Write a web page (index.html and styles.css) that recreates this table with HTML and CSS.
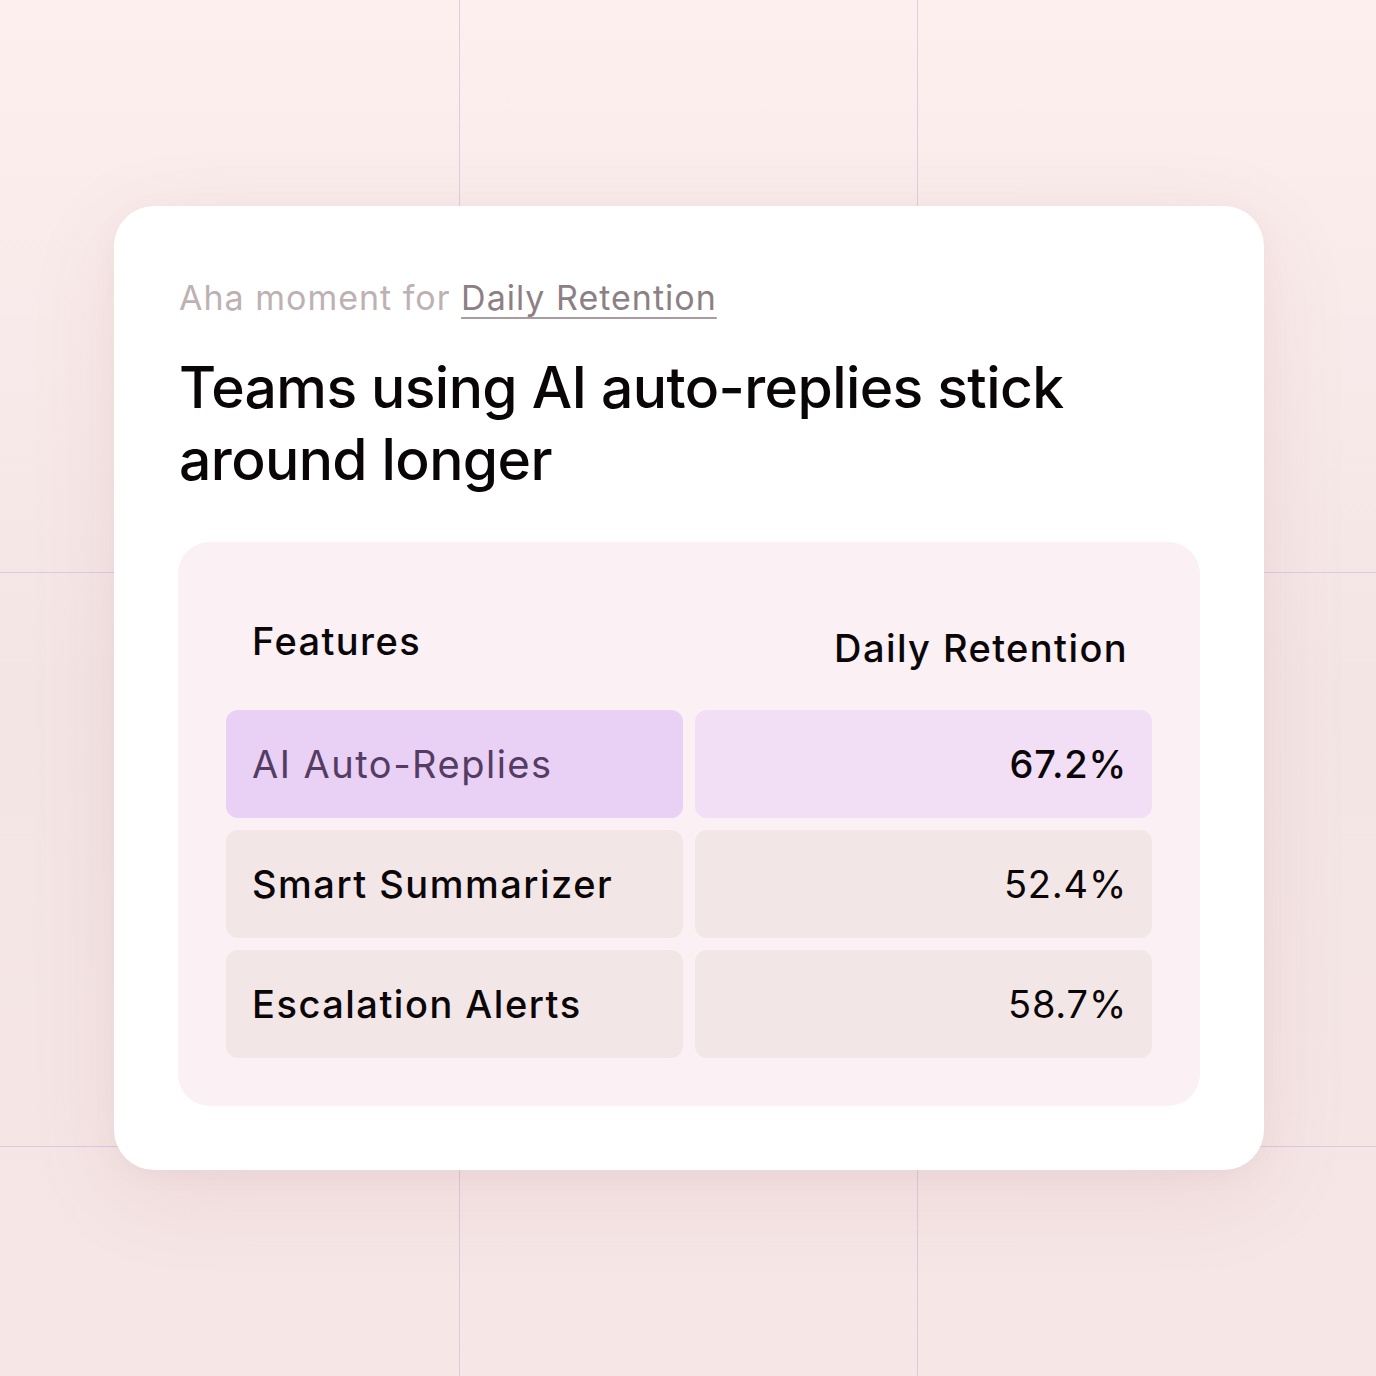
FILE: index.html
```html
<!DOCTYPE html>
<html lang="en">
<head>
<meta charset="utf-8">
<title>Aha moment</title>
<link rel="stylesheet" href="styles.css">
</head>
<body>
<main class="stage">
  <section class="card">
    <p class="eyebrow">Aha moment for <span class="eyebrow-link">Daily Retention</span></p>
    <h1 class="title">Teams using AI auto-replies stick around longer</h1>
    <div class="panel">
      <div class="table">
        <div class="th th-left">Features</div>
        <div class="th th-right">Daily Retention</div>
        <div class="cell cell-name cell-hl-name">AI Auto-Replies</div>
        <div class="cell cell-val cell-hl-val">67.2%</div>
        <div class="cell cell-name">Smart Summarizer</div>
        <div class="cell cell-val">52.4%</div>
        <div class="cell cell-name">Escalation Alerts</div>
        <div class="cell cell-val">58.7%</div>
      </div>
    </div>
  </section>
</main>
</body>
</html>
```
FILE: styles.css
```css
* { box-sizing: border-box; }
html, body { margin: 0; padding: 0; }
body {
  width: 1376px;
  height: 1376px;
  font-family: Inter, "Noto Sans", sans-serif;
  color: #0b0708;
  background-color: #f6e8e8;
  background-image:
    linear-gradient(90deg, transparent 459px, rgba(196, 170, 230, 0.5) 459px, rgba(196, 170, 230, 0.5) 460px, transparent 460px),
    linear-gradient(90deg, transparent 917px, rgba(196, 170, 230, 0.5) 917px, rgba(196, 170, 230, 0.5) 918px, transparent 918px),
    linear-gradient(180deg, transparent 572px, rgba(196, 170, 230, 0.5) 572px, rgba(196, 170, 230, 0.5) 573px, transparent 573px),
    linear-gradient(180deg, transparent 1146px, rgba(196, 170, 230, 0.5) 1146px, rgba(196, 170, 230, 0.5) 1147px, transparent 1147px),
    linear-gradient(180deg, #fcefee 0%, #f4e5e5 50%, #f6e6e6 100%);
}
.stage {
  width: 1376px;
  height: 1376px;
  padding-left: 2px;
  display: flex;
  align-items: center;
  justify-content: center;
}
.card {
  width: 1150px;
  height: 964px;
  background: #ffffff;
  border-radius: 40px;
  padding: 72px 64px 64px 64px;
  box-shadow: 0 24px 90px rgba(160, 90, 100, 0.10), 0 4px 24px rgba(160, 90, 100, 0.05);
  display: flex;
  flex-direction: column;
}
.eyebrow {
  margin: 0 0 0 1px;
  font-size: 34px;
  line-height: 40px;
  color: #beb1b4;
  letter-spacing: 1px;
}
.eyebrow-link {
  color: #8d8084;
  text-decoration: underline;
  text-decoration-thickness: 2px;
  text-underline-offset: 7px;
  text-decoration-color: #a89ca0;
}
.title {
  margin: 34px 0 0 1px;
  font-size: 57px;
  line-height: 72px;
  font-weight: 500;
  letter-spacing: -0.6px;
  max-width: 940px;
  color: #0a0608;
}
.panel {
  margin-top: 46px;
  background: #fbf0f3;
  border-radius: 32px;
  padding: 64px 48px 48px;
  flex: 1;
}
.table {
  display: grid;
  grid-template-columns: 457px 457px;
  grid-template-rows: 92px 108px 108px 108px;
  column-gap: 12px;
  row-gap: 12px;
}
.th {
  font-size: 38px;
  line-height: 46px;
  font-weight: 500;
  letter-spacing: 1.4px;
  padding: 12px 26px 0;
}
.th-right { text-align: right; padding-top: 19px; padding-right: 24px; }
.cell {
  border-radius: 12px;
  background: #f3e6e7;
  display: flex;
  align-items: center;
  padding: 0 26px;
  font-size: 38px;
  font-weight: 500;
  letter-spacing: 1.5px;
}
.cell-val { justify-content: flex-end; font-weight: 400; letter-spacing: 0.8px; padding-right: 25px; }
.cell-hl-name { background: #e9d0f5; color: #553c62; font-weight: 400; }
.cell-hl-val { background: #f2dff5; font-weight: 500; }
```
